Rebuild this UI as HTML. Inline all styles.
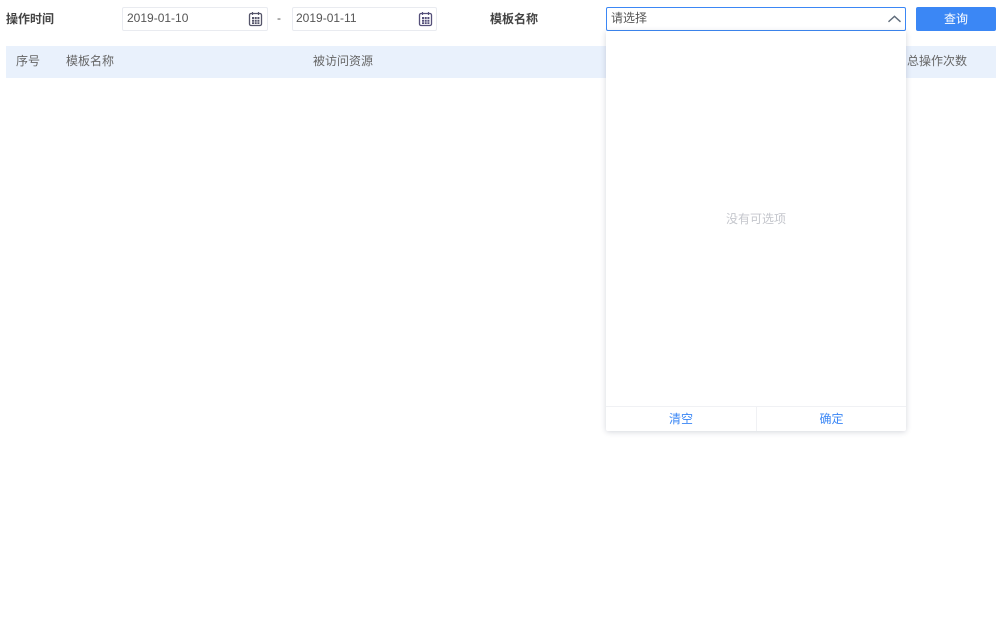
<!DOCTYPE html>
<html lang="zh-CN">
<head>
<meta charset="utf-8">
<style>
html,body{margin:0;padding:0;background:#fff;width:1002px;height:629px;overflow:hidden}
body{position:relative;font-family:"Liberation Sans","Noto Sans CJK SC",sans-serif;font-size:12px;color:#555}
.a{position:absolute;white-space:nowrap;line-height:16px}
.b{font-weight:bold;color:#444}
.input{position:absolute;box-sizing:border-box;top:7px;height:24px;border:1px solid #e9ebf0;border-radius:2px;background:#fff}
svg{position:absolute;display:block}
</style>
</head>
<body>
<div class="a b" style="left:6px;top:11px">操作时间</div>

<div class="input" style="left:122px;width:146px"></div>
<div class="a" style="left:127px;top:10px;color:#555">2019-01-10</div>
<svg style="left:248px;top:11px" width="15" height="16" viewBox="0 0 15 16" fill="none">
<rect x="1.500" y="2.500" width="12" height="12" rx="1.500" stroke="#55556a" stroke-width="1.300"/>
<path d="M4.500 1v3M10.500 1v3" stroke="#55556a" stroke-width="1.200"/>
<path d="M4 6h2v2H4zM6.700 6h2v2h-2zM9.400 6h2v2h-2zM4 8.800h2v2H4zM6.700 8.800h2v2h-2zM9.400 8.800h2v2h-2zM4 11.300h2v1.700H4zM6.700 11.300h2v1.700h-2zM9.400 11.300h2v1.700h-2z" fill="#55556a"/>
</svg>

<div class="a" style="left:277px;top:10px">-</div>

<div class="input" style="left:292px;width:145px"></div>
<div class="a" style="left:296px;top:10px;color:#555">2019-01-11</div>
<svg style="left:418px;top:11px" width="15" height="16" viewBox="0 0 15 16" fill="none">
<rect x="1.500" y="2.500" width="12" height="12" rx="1.500" stroke="#55507a" stroke-width="1.300"/>
<path d="M4.500 1v3M10.500 1v3" stroke="#55507a" stroke-width="1.200"/>
<path d="M4 6h2v2H4zM6.700 6h2v2h-2zM9.400 6h2v2h-2zM4 8.800h2v2H4zM6.700 8.800h2v2h-2zM9.400 8.800h2v2h-2zM4 11.300h2v1.700H4zM6.700 11.300h2v1.700h-2zM9.400 11.300h2v1.700h-2z" fill="#55507a"/>
</svg>

<div class="a b" style="left:490px;top:11px">模板名称</div>

<div style="position:absolute;left:6px;top:46px;width:990px;height:32px;background:#e9f1fc"></div>
<div class="a" style="left:16px;top:53px;color:#666">序号</div>
<div class="a" style="left:66px;top:53px;color:#666">模板名称</div>
<div class="a" style="left:313px;top:53px;color:#666">被访问资源</div>
<div class="a" style="left:907px;top:53px;color:#666">总操作次数</div>

<div style="position:absolute;box-sizing:border-box;left:606px;top:7px;width:300px;height:24px;border:1px solid #3b87f5;border-radius:2px;background:#fff"></div>
<div class="a" style="left:611px;top:10px;color:#555">请选择</div>
<svg style="left:887px;top:14px" width="15" height="9" viewBox="0 0 15 9" fill="none">
<path d="M1.500 7.800L7.500 2.300L13.500 7.800" stroke="#5f6b7a" stroke-width="1.400"/>
</svg>

<div style="position:absolute;left:916px;top:7px;width:80px;height:24px;background:#3b87f5;border-radius:2px;color:#fff;text-align:center;line-height:24px">查询</div>

<div style="position:absolute;left:606px;top:31px;width:300px;height:400px;background:#fff;border-radius:0 0 2px 2px;box-shadow:0 1px 6px rgba(40,50,80,.2)">
  <div class="a" style="left:0;width:300px;text-align:center;top:180px;color:#c4c6cc">没有可选项</div>
  <div style="position:absolute;left:0;top:375px;width:300px;height:1px;background:#f0f1f4"></div>
  <div style="position:absolute;left:150px;top:376px;width:1px;height:24px;background:#f0f1f4"></div>
  <div class="a" style="left:0;width:150px;text-align:center;top:380px;color:#3b87f5">清空</div>
  <div class="a" style="left:151px;width:149px;text-align:center;top:380px;color:#3b87f5">确定</div>
</div>
</body>
</html>
